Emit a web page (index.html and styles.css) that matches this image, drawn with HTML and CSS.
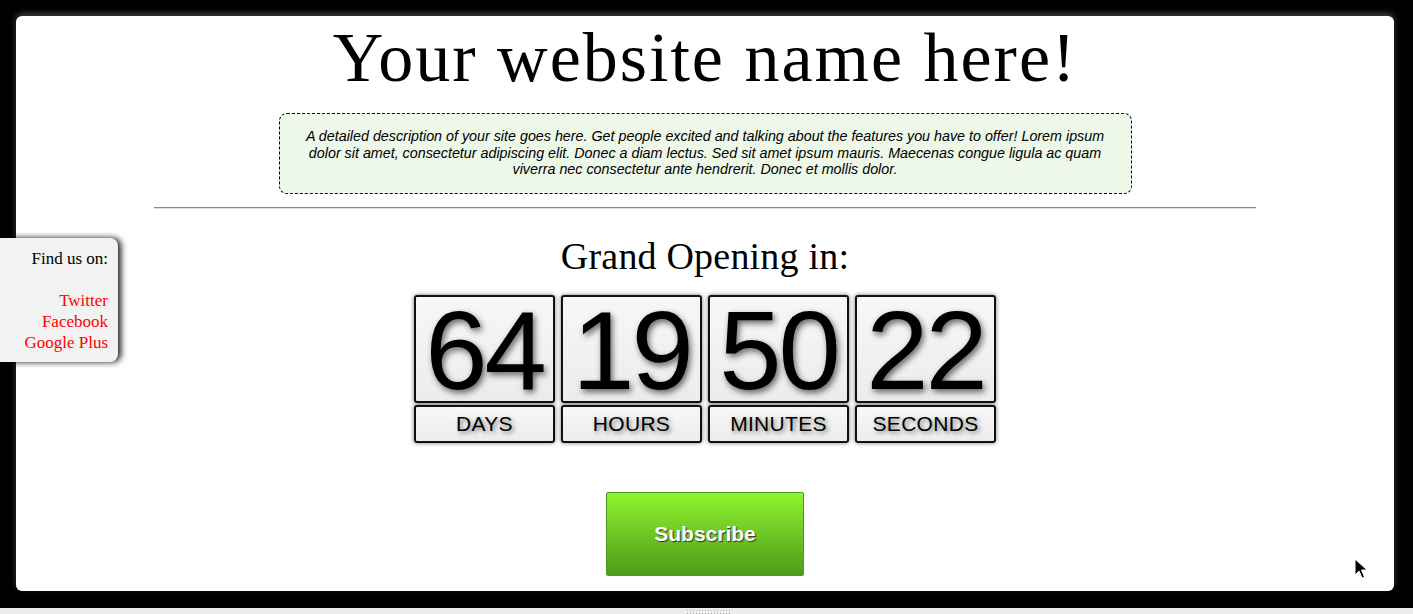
FILE: index.html
```html
<!DOCTYPE html>
<html>
<head>
<meta charset="utf-8">
<title>Coming soon</title>
<link rel="stylesheet" href="styles.css">
</head>
<body>
<div class="page">
  <main class="panel">
    <h1 class="site-title">Your website name here!</h1>
    <p class="description">A detailed description of your site goes here. Get people excited and talking about the features you have to offer! Lorem ipsum dolor sit amet, consectetur adipiscing elit. Donec a diam lectus. Sed sit amet ipsum mauris. Maecenas congue ligula ac quam viverra nec consectetur ante hendrerit. Donec et mollis dolor.</p>
    <hr class="divider">
    <h2 class="opening">Grand Opening in:</h2>
    <div class="countdown">
      <div class="unit"><div class="digits">64</div><div class="label">DAYS</div></div>
      <div class="unit"><div class="digits">19</div><div class="label">HOURS</div></div>
      <div class="unit"><div class="digits">50</div><div class="label">MINUTES</div></div>
      <div class="unit"><div class="digits">22</div><div class="label">SECONDS</div></div>
    </div>
    <button class="subscribe">Subscribe</button>
  </main>
  <div class="bottom-bar"><div class="grip"></div></div>
</div>
<aside class="social">
  <div class="social-title">Find us on:</div>
  <a class="social-link" href="#">Twitter</a>
  <a class="social-link" href="#">Facebook</a>
  <a class="social-link" href="#">Google Plus</a>
</aside>
<svg class="cursor" width="14" height="22" viewBox="0 0 14 22"><path d="M1 1 L1 17 L5 13 L8 20 L10.5 19 L7.5 12 L13 12 Z" fill="#000" stroke="#fff" stroke-width="1"/></svg>
</body>
</html>
```
FILE: styles.css
```css
html, body {
  margin: 0;
  padding: 0;
  background: #000;
  height: 614px;
  overflow: hidden;
}
.page {
  display: flex;
  flex-direction: column;
  height: 614px;
}
.panel {
  margin: 16px 19px 0 16px;
  height: 575px;
  box-sizing: border-box;
  background: #fff;
  border-radius: 6px;
  box-shadow: 0 -3px 6px rgba(120,120,120,0.5);
  display: flex;
  flex-direction: column;
  align-items: center;
  overflow: hidden;
}
.site-title {
  margin: 7px 0 0 0;
  font-family: "Liberation Serif", serif;
  font-weight: normal;
  font-size: 70px;
  letter-spacing: 2px;
  line-height: 70px;
  color: #000;
}
.description {
  margin: 20px 0 0 0;
  width: 853px;
  box-sizing: border-box;
  padding: 14px 20px 15px;
  border: 1px dashed #000;
  border-radius: 8px;
  background: #eef8e9;
  font-family: "Liberation Sans", Arial, sans-serif;
  font-style: italic;
  font-size: 14.3px;
  line-height: 16.5px;
  text-align: center;
  color: #000;
}
.divider {
  width: 80%;
  margin: 13px 0 0 0;
  border: 0;
  border-top: 1px solid #8a8a8a;
  border-bottom: 1px solid #e0e0e0;
  height: 0;
}
.opening {
  margin: 28px 0 0 0;
  font-family: "Liberation Serif", serif;
  font-weight: normal;
  font-size: 38px;
  letter-spacing: 0.2px;
  line-height: 38px;
  color: #000;
}
.countdown {
  margin-top: 20px;
  display: flex;
  gap: 6px;
}
.unit {
  display: flex;
  flex-direction: column;
  gap: 2px;
  width: 141px;
}
.digits, .label {
  box-sizing: border-box;
  border: 2px solid #111;
  border-radius: 3px;
  background: linear-gradient(#f7f7f7, #ececec);
  box-shadow: 0 0 4px rgba(0,0,0,0.55);
  font-family: "Liberation Sans", Arial, sans-serif;
  text-align: center;
  color: #000;
}
.digits {
  height: 108px;
  font-size: 112px;
  line-height: 108px;
  letter-spacing: -3px;
  text-shadow: 2px 3px 6px rgba(0,0,0,0.6);
}
.label {
  height: 38px;
  font-size: 21px;
  letter-spacing: 0.3px;
  line-height: 34px;
  text-shadow: 2px 2px 4px rgba(0,0,0,0.5);
}
.subscribe {
  margin-top: 49px;
  width: 198px;
  height: 84px;
  border: 1px solid #4a9a1c;
  border-radius: 2px;
  background: linear-gradient(#8ef52f, #4f9a19);
  color: #fff;
  font-family: "Liberation Sans", Arial, sans-serif;
  font-weight: bold;
  font-size: 21px;
  text-shadow: 1px 1px 1px #333;
  cursor: pointer;
}
.bottom-bar {
  margin-top: auto;
  height: 6px;
  background: #ececec;
  display: flex;
  justify-content: center;
}
.grip {
  width: 46px;
  height: 5px;
  margin-top: 1px;
  margin-left: 4px;
  background-image: radial-gradient(circle, #b0b0b0 0.8px, transparent 1px);
  background-size: 3px 3px;
}
.social {
  position: absolute;
  left: 0;
  top: 238px;
  width: 118px;
  height: 124px;
  box-sizing: border-box;
  padding: 10px 10px 0 0;
  background: #f2f2f2;
  border-radius: 0 8px 8px 0;
  box-shadow: 3px 0 6px rgba(0,0,0,0.9);
  display: flex;
  flex-direction: column;
  align-items: flex-end;
  font-family: "Liberation Serif", serif;
  font-size: 17px;
  line-height: 21px;
}
.social-title {
  color: #000;
  margin-bottom: 21px;
}
.social-link {
  color: #f00;
  text-decoration: none;
}
.cursor {
  position: absolute;
  left: 1354px;
  top: 558px;
}
```
